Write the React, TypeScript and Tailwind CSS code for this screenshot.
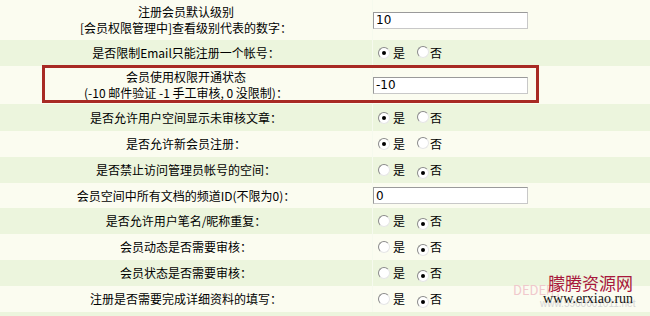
import React from 'react'

type Row = {
  label: string[]
  h: string
  bg: 'cream' | 'green'
  input?: string
  yes?: boolean
}

const rows: Row[] = [
  { label: ['注册会员默认级别', '[会员权限管理中]查看级别代表的数字：'], h: 'h-[40px]', bg: 'cream', input: '10' },
  { label: ['是否限制Email只能注册一个帐号：'], h: 'h-[26px]', bg: 'green', yes: true },
  { label: ['会员使用权限开通状态', '(-10 邮件验证 -1 手工审核, 0 没限制)：'], h: 'h-[38px]', bg: 'cream', input: '-10' },
  { label: ['是否允许用户空间显示未审核文章：'], h: 'h-[27px]', bg: 'green', yes: true },
  { label: ['是否允许新会员注册：'], h: 'h-[26px]', bg: 'cream', yes: true },
  { label: ['是否禁止访问管理员帐号的空间：'], h: 'h-[26px]', bg: 'green', yes: false },
  { label: ['会员空间中所有文档的频道ID(不限为0)：'], h: 'h-[25px]', bg: 'cream', input: '0' },
  { label: ['是否允许用户笔名/昵称重复：'], h: 'h-[26px]', bg: 'green', yes: false },
  { label: ['会员动态是否需要审核：'], h: 'h-[26px]', bg: 'cream', yes: false },
  { label: ['会员状态是否需要审核：'], h: 'h-[26px]', bg: 'green', yes: false },
  { label: ['注册是否需要完成详细资料的填写：'], h: 'h-[26px]', bg: 'cream', yes: false },
]

function Radio({ checked }: { checked: boolean }) {
  return (
    <span className="relative inline-flex w-[12px] h-[12px] rounded-full bg-white border border-t-[#8a8a8a] border-l-[#8a8a8a] border-r-[#e6e6e6] border-b-[#e6e6e6] items-center justify-center">
      {checked && <span className="w-[4px] h-[4px] rounded-full bg-black" />}
    </span>
  )
}

function YesNo({ yes }: { yes: boolean }) {
  return (
    <div className="flex items-center pl-[5px] text-[12px] text-black">
      <Radio checked={yes} />
      <span className="ml-[3px]">是</span>
      <span className="ml-[12px]"><Radio checked={!yes} /></span>
      <span className="ml-[1px]">否</span>
    </div>
  )
}

export default function App() {
  return (
    <div
      className="relative w-[650px] h-[316px] overflow-hidden bg-[#ecf5dd]"
      style={{ fontFamily: '"Noto Sans CJK SC", "DejaVu Sans", sans-serif' }}
    >
      {rows.map((r, i) => (
        <div
          key={i}
          className={`grid grid-cols-[372px_1fr] ${r.h} ${r.bg === 'cream' ? 'bg-[#fbfcf0]' : 'bg-[#ecf5dd]'}`}
        >
          <div className="flex flex-col items-center justify-center text-[12px] leading-[16px] text-black">
            {r.label.map((t, j) => (
              <div key={j}>{t}</div>
            ))}
          </div>
          <div className="flex items-center border-l border-[#f6faee]">
            {r.input !== undefined ? (
              <div className="w-[155px] h-[17px] bg-white border border-[#9a9a9a] border-b-[#c8c8c8] border-r-[#c8c8c8] flex items-center pl-[2px] text-[12px] text-black" style={{ fontFamily: '"DejaVu Sans", sans-serif' }}>
                {r.input}
              </div>
            ) : (
              <YesNo yes={!!r.yes} />
            )}
          </div>
        </div>
      ))}

      {/* red annotation box */}
      <div className="absolute left-[42px] top-[65px] w-[497px] h-[38px] border-[3px] border-[#a82a24]" />

      {/* watermark */}
      <div className="absolute left-[513px] top-[283px] text-[13px] text-[#f0c8cc] leading-none">DEDE吧</div>
      <div className="absolute left-[540px] top-[299px] text-[10px] text-[#d6d6d6] leading-none" style={{ fontFamily: '"Liberation Sans", sans-serif' }}>
        www.5960001011.net
      </div>
      <div className="absolute left-[548px] top-[274px] text-[17px] text-[#a8183c] leading-none">朦腾资源网</div>
      <div className="absolute left-[543px] top-[292px] text-[14px] text-[#111] leading-none" style={{ fontFamily: '"Liberation Serif", serif' }}>
        www.erxiao.run
      </div>
    </div>
  )
}
